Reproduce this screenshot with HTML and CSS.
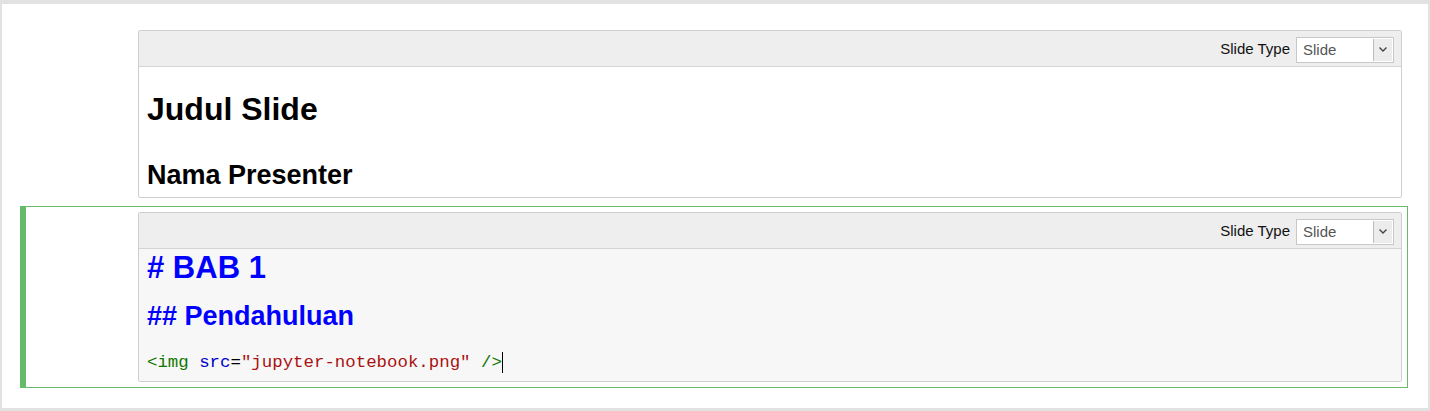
FILE: index.html
```html
<!DOCTYPE html>
<html>
<head>
<meta charset="utf-8">
<link rel="stylesheet" href="styles.css">
</head>
<body>
<div class="notebook">
  <div class="cell">
    <div class="prompt"></div>
    <div class="inner">
      <div class="toolbar">
        <span class="tb-label">Slide Type</span>
        <div class="select"><span class="sel-text">Slide</span><span class="sel-arrow"><svg width="10" height="7" viewBox="0 0 10 7"><path d="M1.5 1.5 L5 5 L8.5 1.5" fill="none" stroke="#444" stroke-width="1.4"/></svg></span></div>
      </div>
      <div class="rendered">
        <h1 class="r-h1">Judul Slide</h1>
        <h2 class="r-h2">Nama Presenter</h2>
      </div>
    </div>
  </div>
  <div class="cell selected">
    <div class="prompt"></div>
    <div class="inner">
      <div class="toolbar">
        <span class="tb-label">Slide Type</span>
        <div class="select"><span class="sel-text">Slide</span><span class="sel-arrow"><svg width="10" height="7" viewBox="0 0 10 7"><path d="M1.5 1.5 L5 5 L8.5 1.5" fill="none" stroke="#444" stroke-width="1.4"/></svg></span></div>
      </div>
      <div class="editor">
        <div class="line e-h1"># BAB 1</div>
        <div class="line e-h2">## Pendahuluan</div>
        <div class="line code"><span class="tag">&lt;img</span> <span class="attr">src</span>=<span class="str">"jupyter-notebook.png"</span> <span class="tag">/&gt;</span><span class="cursor"></span></div>
      </div>
    </div>
  </div>
</div>
</body>
</html>
```
FILE: styles.css
```css
html, body {
  margin: 0;
  padding: 0;
}
body {
  background: #e2e2e2;
  font-family: "Liberation Sans", Arial, sans-serif;
  color: #000;
}
.notebook {
  background: #fff;
  margin: 4px 2px 0 2px;
  padding: 20px 20px 20px 18px;
  height: 404px;
  box-sizing: border-box;
}
.cell {
  display: flex;
  border: 1px solid transparent;
  border-left-width: 6px;
  padding: 5px;
  margin-bottom: 2px;
}
.cell.selected {
  border: 1px solid #66bb6a;
  border-left-width: 6px;
}
.prompt {
  flex: 0 0 107px;
}
.inner {
  flex: 1;
  border: 1px solid #cfcfcf;
  border-radius: 2px;
  min-width: 0;
}
.toolbar {
  display: flex;
  justify-content: flex-end;
  align-items: center;
  height: 36px;
  background: #eee;
  border-bottom: 1px solid #d4d4d4;
  padding-right: 7px;
  padding-top: 1px;
  box-sizing: border-box;
}
.tb-label {
  font-size: 15px;
  color: #111;
  margin-right: 6px;
  margin-top: -1px;
}
.select {
  display: flex;
  width: 98px;
  height: 26px;
  box-sizing: border-box;
  border: 1px solid #c8c8c8;
  background: #fff;
  margin-top: 1px;
}
.sel-text {
  flex: 1;
  font-size: 15px;
  color: #555;
  padding-left: 6px;
  line-height: 24px;
}
.sel-arrow {
  width: 18px;
  margin: 1px;
  background: #ececec;
  border-left: 1px solid #bdbdbd;
  display: flex;
  align-items: center;
  justify-content: center;
}
.rendered {
  padding: 24px 8px 6px 8px;
}
.r-h1 {
  margin: 0;
  font-size: 32px;
  line-height: 37px;
  font-weight: bold;
}
.r-h2 {
  margin: 31px 0 0 0;
  font-size: 27px;
  line-height: 32px;
  font-weight: bold;
}
.editor {
  background: #f7f7f7;
  padding: 1px 8px 8px 8px;
}
.line {
  white-space: pre;
}
.e-h1 {
  color: #00f;
  font-weight: bold;
  font-size: 31px;
  line-height: 36px;
}
.e-h2 {
  color: #00f;
  font-weight: bold;
  font-size: 27px;
  line-height: 32px;
  margin-top: 14px;
}
.code {
  font-family: "Liberation Mono", "Courier New", monospace;
  font-size: 17.4px;
  line-height: 21px;
  margin-top: 20px;
  color: #000;
}
.tag { color: #117700; }
.attr { color: #0000cc; }
.str { color: #aa1111; }
.cursor {
  display: inline-block;
  width: 1px;
  height: 21px;
  background: #000;
  vertical-align: top;
}
```
